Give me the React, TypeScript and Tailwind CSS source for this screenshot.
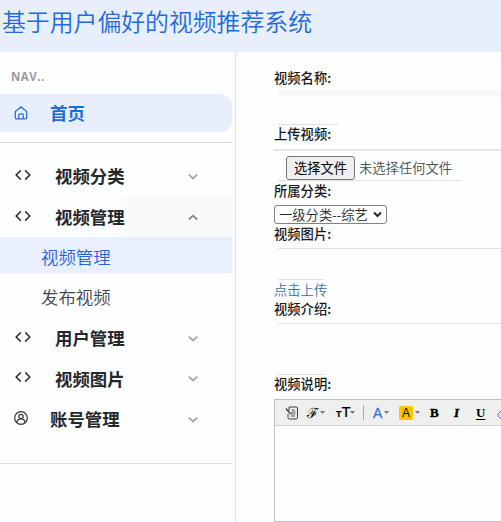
import type { ReactNode } from 'react';

function CodeIcon() {
  return (
    <svg className="h-4 w-4" viewBox="0 0 16 16" fill="none" stroke="#2b2f33" strokeWidth="1.5">
      <path d="M5.800 3.400 1.200 8l4.600 4.600M10.200 3.400 14.800 8l-4.600 4.600" />
    </svg>
  );
}

function HomeIcon() {
  return (
    <svg className="h-4 w-4" viewBox="0 0 16 16" fill="none" stroke="#2a6fd0" strokeWidth="1.3">
      <path d="M2.3 6.5 8 1.9l5.700 4.600V12.500q0 1.300-1.300 1.300H3.600q-1.300 0-1.300-1.300ZM5.800 13.800V9.800q0-1 1-1h2.400q1 0 1 1v4" />
    </svg>
  );
}

function UserIcon() {
  return (
    <svg className="h-4 w-4" viewBox="0 0 16 16" fill="none" stroke="#33373b" strokeWidth="1.2">
      <circle cx="8" cy="8" r="6.300" />
      <circle cx="8" cy="6.500" r="2.200" />
      <path d="M4 12.500C4.200 10 5.800 8.900 8 8.900s3.800 1.100 4 3.600" />
    </svg>
  );
}

function Chevron({ up = false }: { up?: boolean }) {
  return (
    <svg className="mt-px h-3 w-3" viewBox="0 0 12 12" fill="none" stroke={up ? '#85898d' : '#a3a7ab'} strokeWidth="1.8">
      <path d={up ? 'M1.800 7.500 6 3.700l4.200 3.800' : 'M1.800 3.700 6 7.500l4.200-3.800'} />
    </svg>
  );
}

function MenuRow({ icon, text, height, up, account }: { icon: ReactNode; text: string; height: string; up?: boolean; account?: boolean }) {
  return (
    <div className={`flex items-center pr-[33px] ${height} ${account ? 'pl-[13px]' : 'pl-[15px]'}`}>
      <span className="-mt-[3px]">{icon}</span>
      <span className={`flex-1 text-[17.400px] leading-6 font-bold text-[#24282c] ${account ? 'ml-[21px]' : 'ml-[24px]'}`}>{text}</span>
      <Chevron up={up} />
    </div>
  );
}

function Label({ children }: { children: ReactNode }) {
  return <div className="h-5 text-[13.300px] leading-5 font-medium text-[#15191d]">{children}</div>;
}

function Caret() {
  return (
    <svg className="h-[3px] w-[5px]" viewBox="0 0 5 3">
      <path d="M0 0h5L2.500 3Z" fill="#777" />
    </svg>
  );
}

function Toolbar() {
  return (
    <div className="flex h-[26px] items-center border-b border-[#d5d5d6] bg-[#efefee] pl-[10px] font-['Liberation_Serif',serif] text-black">
      <svg className="h-[14px] w-[14px] shrink-0" viewBox="0 0 14 14" fill="none" stroke="#383838">
        <path d="M4 1h7.500q1 0 1 1v9.500q0 1.500-1.500 1.500H4.500Q3 13 3 11.500V8M4 1v4M1 2l4.500 5.500L7 6.500M1 3l4 5" />
        <path d="M6.500 4H10M7 6h3.500M6 8h4.500M5.500 10H10" strokeWidth=".8" />
      </svg>
      <span className="ml-2 w-[13px] font-['DejaVu_Serif',serif] text-[14px] leading-5">ℱ</span>
      <Caret />
      <span className="ml-[11px] flex w-[14px] items-baseline font-['Liberation_Sans',sans-serif] leading-5 [-webkit-text-stroke:0.200px]">
        <span className="text-[9px] font-bold">T</span>
        <span className="text-[15px]">T</span>
      </span>
      <Caret />
      <span className="ml-[8px] h-[15px] w-px bg-[#aaa]" />
      <span className="ml-[9px] w-[11px] font-['Liberation_Sans',sans-serif] text-[14px] leading-5 text-[#3c70e8] [-webkit-text-stroke:0.300px]">A</span>
      <Caret />
      <span className="ml-[10px] flex h-[14px] w-[14px] items-center justify-center rounded-[2px] bg-[#ffc400] font-['Liberation_Sans',sans-serif] text-[12px] leading-none">A</span>
      <span className="ml-[2px] flex"><Caret /></span>
      <span className="ml-[10px] w-[10px] text-[13px] leading-5 font-bold [-webkit-text-stroke:0.400px]">B</span>
      <span className="ml-[14px] w-[10px] text-[13px] leading-5 font-bold italic [-webkit-text-stroke:0.400px]">I</span>
      <span className="ml-[12px] w-[10px] text-[13px] leading-5 font-bold underline underline-offset-2">U</span>
      <svg className="ml-[11px] h-[12px] w-[12px] shrink-0" viewBox="0 0 12 12" fill="#e5e9ff" stroke="#7477b8">
        <path d="m1 7 5-5 5 4-5 5H3L1 9Z" />
      </svg>
    </div>
  );
}

export default function App() {
  return (
    <div className="flex h-[522px] w-[501px] flex-col overflow-hidden bg-[#fdfefe] font-['Noto_Sans_CJK_SC',sans-serif]">
      <header className="h-[52px] shrink-0 bg-[#e7eefc] pl-[2px]">
        <h1 className="text-[23.850px] leading-[41px] font-[350] text-[#2469e1]">基于用户偏好的视频推荐系统</h1>
      </header>
      <div className="flex min-h-0 flex-1">
        <aside className="w-[236px] shrink-0 border-r border-[#dfe1e3] bg-[#fcfeff] pr-[3px]">
          <div className="h-[42px] pt-[17px] pl-[11px] font-['Open_Sans',sans-serif] text-[11.500px] leading-4 font-bold tracking-[0.500px] text-[#999d9f]">NAV..</div>
          <div className="flex h-[38px] items-center rounded-r-[12px] bg-[#e7effd] pl-[13px]">
            <HomeIcon />
            <span className="ml-[21px] text-[17.400px] leading-6 font-bold text-[#206bda]">首页</span>
          </div>
          <div className="mt-[10px] h-px bg-[#dcdfe1]" />
          <div className="mt-[12px]">
            <MenuRow icon={<CodeIcon />} text="视频分类" height="h-[42px]" />
            <div className="bg-gradient-to-r from-transparent from-50% to-[#f7f9fa] to-55%">
              <MenuRow icon={<CodeIcon />} text="视频管理" height="h-[40px]" up />
            </div>
          </div>
          <div className="flex h-[36px] items-center bg-[#e8effd] pl-[41px] text-[17.400px] font-[350] text-[#2467d8]">
            <span className="mt-[3px] leading-6">视频管理</span>
          </div>
          <div className="flex h-[45px] items-center pl-[41px] text-[17.400px] font-[350] text-[#414549]">
            <span className="mt-[3px] leading-6">发布视频</span>
          </div>
          <MenuRow icon={<CodeIcon />} text="用户管理" height="h-[40px]" />
          <MenuRow icon={<CodeIcon />} text="视频图片" height="h-[41px]" />
          <MenuRow icon={<UserIcon />} text="账号管理" height="h-[40px]" account />
          <div className="mt-[24px] h-px bg-[#dcdfe1]" />
        </aside>
        <main className="min-w-0 flex-1 pt-[16px] pl-[38px]">
          <Label>视频名称:</Label>
          <div className="mt-[2px] ml-1 h-[7px] bg-[#f7f8f8]" />
          <div className="mt-[27px] ml-1 h-px w-[61px] bg-[#dddfe0]" />
          <div className="-mt-px">
            <Label>上传视频:</Label>
          </div>
          <div className="mt-[5px] h-[2px] bg-[#e4e6e7]" />
          <div className="mt-[5px] ml-3 flex h-6 items-center">
            <button className="h-6 w-[69px] rounded-[3px] border border-[#77797b] bg-[#efefef] text-[13.300px] leading-5 text-black">选择文件</button>
            <span className="ml-1 text-[13.300px] leading-5 font-[350] text-[#4a4e52]">未选择任何文件</span>
          </div>
          <div className="ml-1 h-px w-[183px] bg-[#dedfe0]" />
          <Label>所属分类:</Label>
          <div className="mt-[4px] flex h-[19px] w-[113px] items-center rounded-[3px] border border-[#808285] bg-white pr-1 pl-1 text-[13.300px] leading-4 font-[350] text-[#25292d]">
            <span className="flex-1 whitespace-nowrap">一级分类--综艺</span>
            <svg className="h-[7px] w-[9px]" viewBox="0 0 9 7" fill="none" stroke="#26292c" strokeWidth="2">
              <path d="m1 1.500 3.500 3.500L8 1.500" />
            </svg>
          </div>
          <Label>视频图片:</Label>
          <div className="mt-[4px] ml-1 h-px bg-[#dfe1e2]" />
          <div className="mt-[30px] ml-1 h-px w-[46px] bg-[#dfe0e1]" />
          <div className="h-[19px] text-[13.300px] leading-5 font-[350] text-[#3c70a4]">点击上传</div>
          <Label>视频介绍:</Label>
          <div className="mt-[4px] ml-1 h-px bg-[#dfe1e2]" />
          <div className="mt-[50px] ml-1 h-px w-[46px] bg-[#dfe0e1]" />
          <div className="-mt-px">
            <Label>视频说明:</Label>
          </div>
          <div className="mt-[5px] h-[123px] w-[280px] border border-[#bec0c1]">
            <Toolbar />
          </div>
        </main>
      </div>
    </div>
  );
}
